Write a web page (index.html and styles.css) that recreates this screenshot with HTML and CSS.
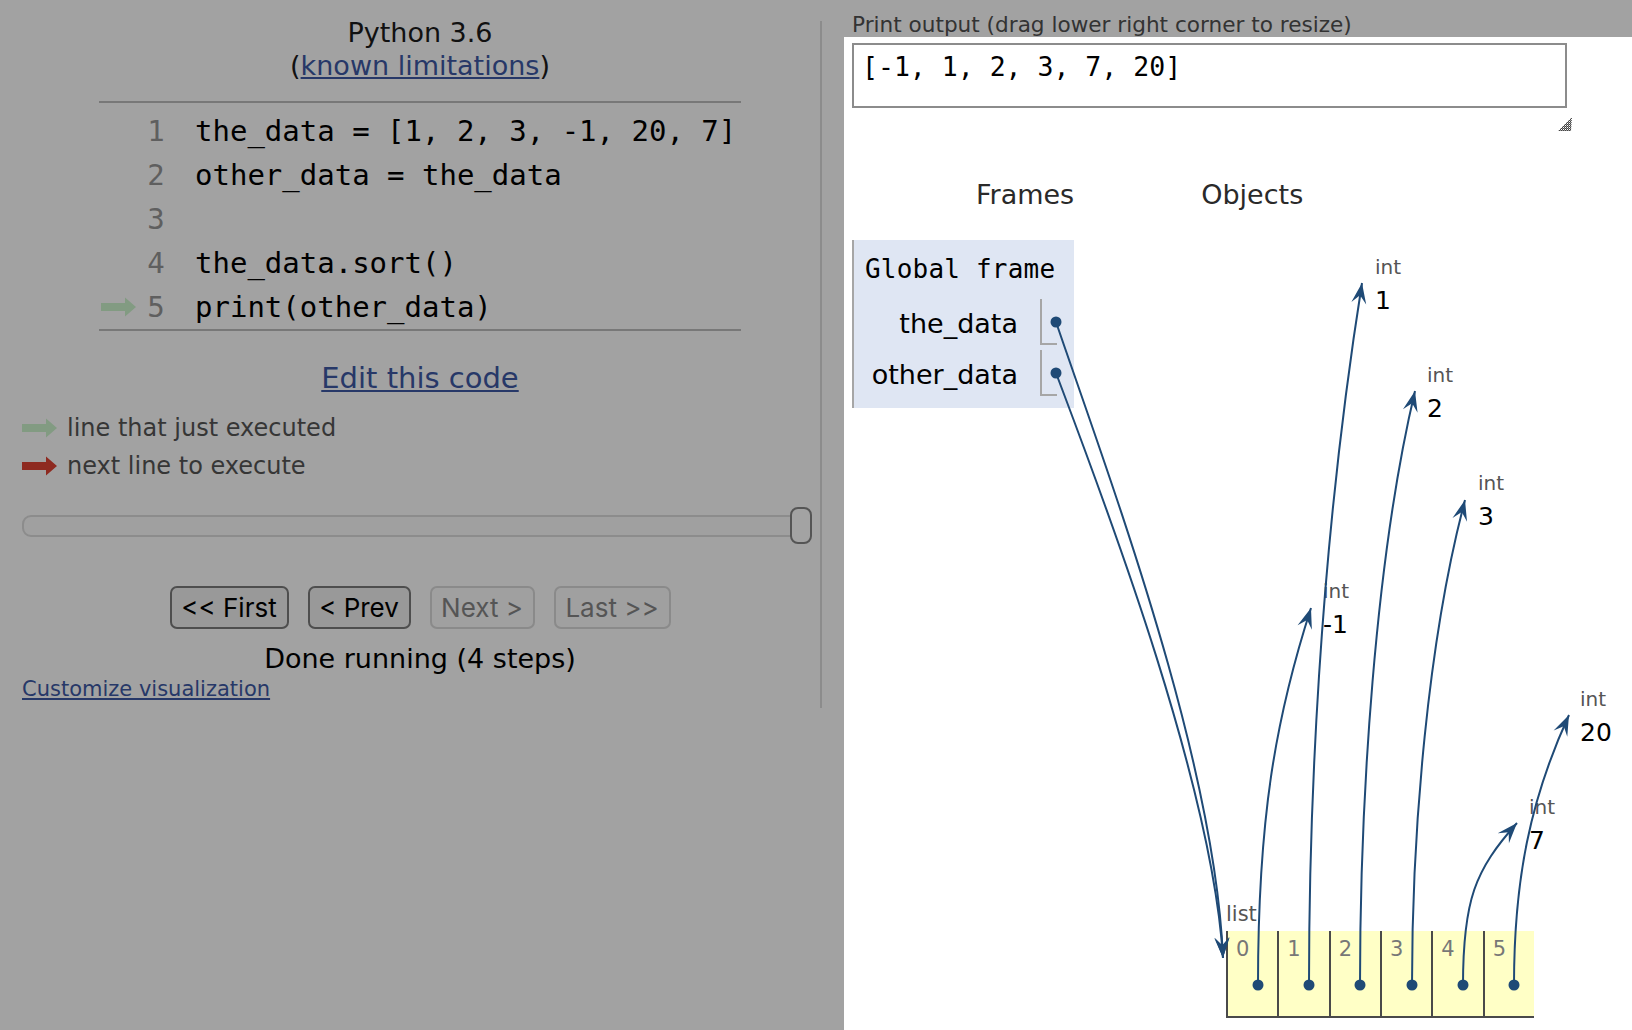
FILE: index.html
```html
<!DOCTYPE html>
<html>
<head>
<meta charset="utf-8">
<title>Python Tutor</title>
<link rel="stylesheet" href="styles.css">
</head>
<body>
<div class="page">
  <div class="left">
    <div class="pane">
      <div class="title">Python 3.6<br>(<a href="#">known limitations</a>)</div>
      <div class="code">
        <div class="row"><span class="gut"></span><span class="ln">1</span><span class="src">the_data = [1, 2, 3, -1, 20, 7]</span></div>
        <div class="row"><span class="gut"></span><span class="ln">2</span><span class="src">other_data = the_data</span></div>
        <div class="row"><span class="gut"></span><span class="ln">3</span><span class="src"></span></div>
        <div class="row"><span class="gut"></span><span class="ln">4</span><span class="src">the_data.sort()</span></div>
        <div class="row"><span class="gut"><svg class="arr" viewBox="0 0 35 20"><path class="green" d="M0 6H24V0.5L35 10L24 19.5V14H0Z"/></svg></span><span class="ln">5</span><span class="src">print(other_data)</span></div>
      </div>
      <div class="edit"><a href="#">Edit this code</a></div>
      <div class="legend">
        <div class="leg"><svg class="arr" viewBox="0 0 35 20"><path class="green" d="M0 6H24V0.5L35 10L24 19.5V14H0Z"/></svg><span>line that just executed</span></div>
        <div class="leg"><svg class="arr" viewBox="0 0 35 20"><path class="red" d="M0 6H24V0.5L35 10L24 19.5V14H0Z"/></svg><span>next line to execute</span></div>
      </div>
      <div class="slider"><div class="track"></div><div class="thumb"></div></div>
      <div class="buttons">
        <div class="btn on b1">&lt;&lt; First</div>
        <div class="btn on b2">&lt; Prev</div>
        <div class="btn off b3">Next &gt;</div>
        <div class="btn off b4">Last &gt;&gt;</div>
      </div>
      <div class="done">Done running (4 steps)</div>
      <div class="cust"><a href="#">Customize visualization</a></div>
    </div>
    <div class="divider"></div>
  </div>
  <div class="right">
    <div class="hdr">Print output (drag lower right corner to resize)</div>
    <div class="viz">
      <div class="outbox">[-1, 1, 2, 3, 7, 20]</div>
      <div class="grip-row">
        <svg class="grip" width="16" height="16" viewBox="0 0 16 16">
          <defs><pattern id="chk" width="2" height="2" patternUnits="userSpaceOnUse"><rect width="1" height="1" fill="#444"/><rect x="1" y="1" width="1" height="1" fill="#444"/><rect x="1" width="1" height="1" fill="#999"/></pattern></defs>
          <path d="M15 1 L14 15 L1 15 Z" fill="url(#chk)"/>
        </svg>
      </div>
      <div class="heads"><span class="fr">Frames</span><span class="ob">Objects</span></div>
      <div class="frame">
        <div class="fname">Global frame</div>
        <div class="vars">
          <div class="var"><span class="vn">the_data</span><span class="vv"></span></div>
          <div class="var"><span class="vn">other_data</span><span class="vv"></span></div>
        </div>
      </div>

      <div class="obj o1"><div class="t">int</div><div class="v">1</div></div>
      <div class="obj o2"><div class="t">int</div><div class="v">2</div></div>
      <div class="obj o3"><div class="t">int</div><div class="v">3</div></div>
      <div class="obj o4"><div class="t">int</div><div class="v">-1</div></div>
      <div class="obj o5"><div class="t">int</div><div class="v">20</div></div>
      <div class="obj o6"><div class="t">int</div><div class="v">7</div></div>

      <div class="list">
        <div class="lbl">list</div>
        <div class="cells">
          <div class="cell">0</div>
          <div class="cell">1</div>
          <div class="cell">2</div>
          <div class="cell">3</div>
          <div class="cell">4</div>
          <div class="cell">5</div>
        </div>
      </div>

      <svg class="wires" viewBox="844 37 788 993" width="788" height="993">
        <defs>
          <marker id="ah" markerUnits="userSpaceOnUse" viewBox="-21 -8 22 16" refX="0" refY="0" markerWidth="22" markerHeight="16" orient="auto">
            <path d="M0,0 L-20.5,-7.5 L-12.5,0 L-20.5,7.5 Z" class="head"/>
          </marker>
        </defs>
        <path class="wire" d="M1056,322 C1110,480 1215,760 1223,958"/>
        <path class="wire" d="M1056,373 C1100,490 1212,780 1223,958"/>
        <path class="wire" d="M1258,985 C1258,820 1275,720 1311,608"/>
        <path class="wire" d="M1309,985 C1309,820 1318,560 1362,283"/>
        <path class="wire" d="M1360,985 C1360,800 1375,560 1415,391"/>
        <path class="wire" d="M1412,985 C1412,830 1428,640 1465,500"/>
        <path class="wire" d="M1463,985 C1463,900 1475,870 1517,823"/>
        <path class="wire" d="M1514,985 C1514,880 1530,800 1569,715"/>
        <circle class="dot" cx="1056" cy="322" r="5.5"/>
        <circle class="dot" cx="1056" cy="373" r="5.5"/>
        <circle class="dot" cx="1258" cy="985" r="5.5"/>
        <circle class="dot" cx="1309" cy="985" r="5.5"/>
        <circle class="dot" cx="1360" cy="985" r="5.5"/>
        <circle class="dot" cx="1412" cy="985" r="5.5"/>
        <circle class="dot" cx="1463" cy="985" r="5.5"/>
        <circle class="dot" cx="1514" cy="985" r="5.5"/>
      </svg>
    </div>
  </div>
</div>
</body>
</html>
```

FILE: styles.css
```css
* { box-sizing: border-box; }
html, body { margin: 0; padding: 0; }
body {
  background: #a2a2a2;
  font-family: "DejaVu Sans", Verdana, sans-serif;
  width: 1632px;
  height: 1030px;
  overflow: hidden;
}
a { color: #273868; text-decoration: underline; }

.page { display: flex; height: 1030px; }

/* ---------- left pane ---------- */
.left { width: 844px; flex: none; display: flex; padding-left: 22px; }
.pane { width: 796px; flex: none; padding-top: 16px; display: flex; flex-direction: column; }
.divider { width: 2px; height: 687px; margin-top: 21px; margin-left: 2px; background: #8c8c8c; flex: none; }

.title { text-align: center; font-size: 27px; line-height: 33px; color: #111; }

.code {
  width: 642px;
  margin: 19px auto 0;
  border-top: 2px solid #787878;
  border-bottom: 2px solid #787878;
  padding-top: 6px;
  font-family: "DejaVu Sans Mono", monospace;
  font-size: 29px;
  line-height: 44px;
}
.row { display: flex; align-items: center; height: 44px; }
.gut { width: 40px; height: 44px; display: flex; align-items: center; padding-left: 2px; flex: none; }
.ln { width: 34px; text-align: center; color: #5f5f5f; flex: none; }
.src { padding-left: 22px; white-space: pre; color: #000; }

.arr { width: 35px; height: 20px; display: block; flex: none; }
.green { fill: #829b82; }
.red { fill: #8e2a20; }

.edit { text-align: center; font-size: 29px; line-height: 34px; margin-top: 30px; }

.legend { margin-top: 14px; font-size: 24px; line-height: 38px; color: #363636; }
.leg { display: flex; align-items: center; gap: 10px; height: 38px; }

.slider { display: flex; align-items: center; width: 790px; height: 37px; margin-top: 22px; }
.track { flex: 1; height: 22px; border: 2px solid #8c8c8c; border-radius: 9px; background: #a0a0a0; }
.thumb { width: 22px; height: 37px; margin-left: -22px; border: 2px solid #555; border-radius: 8px; background: #a3a3a3; flex: none; }

.buttons { display: flex; justify-content: center; gap: 19px; margin-top: 42px; }
.btn {
  height: 43px;
  border-radius: 7px;
  font-family: Inter, "DejaVu Sans", sans-serif;
  font-size: 26px;
  display: flex;
  align-items: center;
  justify-content: center;
}
.btn.on { border: 2px solid #4e4e4e; background: #999; color: #000; }
.btn.off { border: 2px solid #8a8a8a; background: #a0a0a0; color: #555; }
.b1 { width: 119px; }
.b2 { width: 103px; }
.b3 { width: 105px; }
.b4 { width: 117px; }

.done { text-align: center; font-size: 27px; line-height: 32px; margin-top: 14px; color: #000; }
.cust { font-size: 21px; line-height: 24px; margin-top: 2px; }

/* ---------- right pane ---------- */
.right { flex: 1; display: flex; flex-direction: column; }
.hdr { height: 37px; flex: none; padding: 13px 0 0 8px; font-size: 21.6px; line-height: 24px; color: #333; white-space: nowrap; }
.viz { flex: 1; background: #fff; position: relative; padding: 6px 0 0 8px; }

.outbox {
  width: 715px;
  height: 65px;
  border: 2px solid #8c8c8c;
  padding: 7px 0 0 8px;
  font-family: "DejaVu Sans Mono", monospace;
  font-size: 26.5px;
  line-height: 30px;
  color: #000;
  white-space: pre;
}
.grip-row { width: 721px; height: 16px; margin-top: 8px; display: flex; justify-content: flex-end; }
.grip { display: block; }

.heads { display: flex; margin-top: 47px; font-size: 27px; line-height: 32px; color: #2a2a2a; }
.heads .fr { margin-left: 124px; }
.heads .ob { margin-left: 127px; }

.frame {
  width: 222px;
  margin-top: 29px;
  border-left: 2px solid #a6a6a6;
  background: #dfe6f3;
  padding: 14px 17px 12px 11px;
}
.fname { font-family: "DejaVu Sans Mono", monospace; font-size: 26px; line-height: 30px; letter-spacing: 0.2px; color: #000; white-space: nowrap; }
.vars { margin-top: 15px; display: flex; flex-direction: column; gap: 5px; }
.var { display: flex; align-items: center; height: 46px; }
.vn { flex: 1; text-align: right; margin-right: 22px; padding-top: 4px; font-size: 27px; line-height: 32px; color: #000; white-space: nowrap; }
.vv { width: 17px; height: 46px; flex: none; border-left: 2px solid #a6a6a6; border-bottom: 2px solid #a6a6a6; }

/* heap objects placed on the diagram canvas */
.obj { position: absolute; }
.obj .t { font-size: 20px; line-height: 20px; color: #555; }
.obj .v { font-size: 25px; line-height: 25px; margin-top: 11px; color: #000; }
.o1 { left: 531px; top: 220px; }
.o2 { left: 583px; top: 328px; }
.o3 { left: 634px; top: 436px; }
.o4 { left: 479px; top: 544px; }
.o5 { left: 736px; top: 652px; }
.o6 { left: 685px; top: 760px; }

.list { position: absolute; left: 382px; top: 867px; }
.list .lbl { font-size: 21px; line-height: 21px; color: #555; }
.cells { display: flex; margin-top: 6px; border-bottom: 2px solid #4a4a4a; }
.cell {
  width: 51.33px;
  height: 85px;
  border-left: 2px solid #4a4a4a;
  background: #ffffc6;
  padding: 8px 0 0 8px;
  font-size: 21px;
  line-height: 21px;
  color: #777;
}

.wires { position: absolute; left: 0; top: 0; pointer-events: none; overflow: visible; }
.wire { fill: none; stroke: #1f4a76; stroke-width: 2; marker-end: url(#ah); }
.head { fill: #1f4a76; }
.dot { fill: #1f4a76; }
```
